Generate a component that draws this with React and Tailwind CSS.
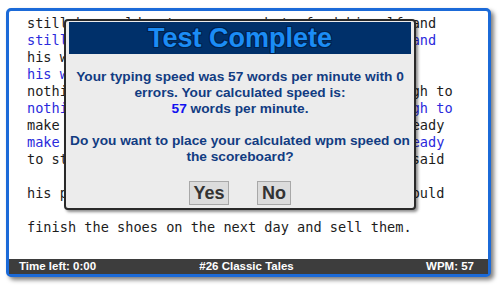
import React from 'react';

const lines = [
    { text: 'still he could not earn enough to feed himself and', typed: false },
    { text: 'still he could not earn enough to feed himself and', typed: true },
    { text: 'his wife. Soon there came a time when he had', typed: false },
    { text: 'his wife. Soon there came a time when he had', typed: true },
    { text: 'nothing left except leather which was just enough to', typed: false },
    { text: 'nothing left except leather which was just enough to', typed: true },
    { text: 'make one pair of shoes. He cut them out to be ready', typed: false },
    { text: 'make one pair of shoes. He cut them out to be ready', typed: true },
    { text: 'to start sewing them the next morning. Then he said', typed: false },
    { text: '', typed: false },
    { text: 'his prayers and went to bed, thinking that he would', typed: false },
    { text: '', typed: false },
    { text: 'finish the shoes on the next day and sell them.', typed: false },
];

const ResultDialog = () => (
    <div className="absolute left-[55px] top-[8px] w-[352px] bg-[#ececec] border-2 border-[#2a2a2a] rounded-[4px] px-[3px] pt-px pb-[3px] shadow-[2px_2px_3px_rgba(0,0,0,0.45)] font-['Liberation_Sans',Arial,sans-serif]">
        <div className="h-[32px] bg-[#00306a] flex items-center justify-center">
            <span className="text-[27px] font-bold leading-none text-[#1b8cf5] [text-shadow:1px_0_0_#00224d,-1px_0_0_#00224d,0_1px_0_#00224d,0_-1px_0_#00224d,1px_1px_0_#00224d,-1px_-1px_0_#00224d,1px_-1px_0_#00224d,-1px_1px_0_#00224d]">
                Test Complete
            </span>
        </div>
        <div className="pt-[15px] text-center text-[13.7px] leading-[16px] font-bold text-[#123c82] whitespace-nowrap">
            <p>
                Your typing speed was 57 words per minute with 0<br />
                errors. Your calculated speed is:<br />
                <span className="text-[#1212f0]">57</span> words per minute.
            </p>
            <p className="mt-[16px]">
                Do you want to place your calculated wpm speed on<br />
                the scoreboard?
            </p>
        </div>
        <div className="mt-[16px] flex justify-center gap-[28px]">
            <button className="h-[24px] w-[40px] bg-[#dcdcdc] border border-[#a8a8a8] text-[18px] font-bold text-[#333] leading-none">Yes</button>
            <button className="h-[24px] w-[34px] bg-[#dcdcdc] border border-[#a8a8a8] text-[18px] font-bold text-[#333] leading-none">No</button>
        </div>
    </div>
);

const App = () => {
    return (
        <div className="w-[500px] h-[286px] bg-white pl-[6px] pt-[8px]">
            <div className="relative w-[485px] h-[269px] border-[3px] border-[#1b6ad8] rounded-[5px] bg-white flex flex-col shadow-[3px_3px_4px_rgba(0,0,0,0.5)]">
                <div className="flex-1 pl-[18px] pt-[4px] font-['DejaVu_Sans_Mono',monospace] text-[13.6px] leading-[17px] whitespace-pre overflow-hidden">
                    {lines.map((line, i) => (
                        <div key={i} className={`h-[17px] ${line.typed ? 'text-[#2a2adc]' : 'text-[#1c1c1c]'}`}>
                            {line.text}
                        </div>
                    ))}
                </div>
                <div className="h-[15px] bg-[#3d3d3d] flex items-center justify-between pl-[10px] pr-[14px] text-white text-[11.5px] font-bold font-['Liberation_Sans',Arial,sans-serif] leading-none">
                    <span className="w-[100px]">Time left: 0:00</span>
                    <span>#26 Classic Tales</span>
                    <span className="w-[100px] text-right">WPM: 57</span>
                </div>
                <ResultDialog />
            </div>
        </div>
    );
};

export default App;
